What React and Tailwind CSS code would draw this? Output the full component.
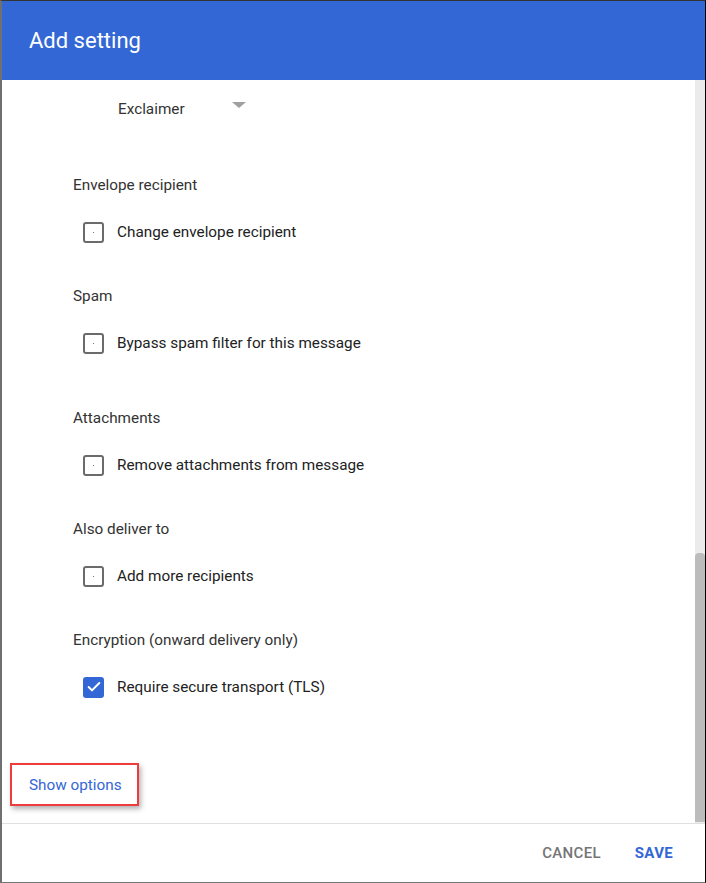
import { Check } from "lucide-react";

const sections = [
  { title: "Envelope recipient", label: "Change envelope recipient", gap: "mt-[56px]" },
  { title: "Spam", label: "Bypass spam filter for this message", gap: "mt-[44px]" },
  { title: "Attachments", label: "Remove attachments from message", gap: "mt-[55px]" },
  { title: "Also deliver to", label: "Add more recipients", gap: "mt-[44px]" },
  { title: "Encryption (onward delivery only)", label: "Require secure transport (TLS)", gap: "mt-[44px]", checked: true },
];

function Box({ checked }) {
  if (checked) {
    return (
      <span className="w-[21px] h-[21px] rounded-[3px] bg-[#3367d6] flex items-center justify-center">
        <Check className="w-[16px] h-[16px] text-white" strokeWidth={3} />
      </span>
    );
  }
  return (
    <span className="w-[21px] h-[21px] rounded-[3px] border-2 border-[#6b6b6b] flex items-center justify-center">
      <span className="w-px h-px bg-[#777]" />
    </span>
  );
}

export default function App() {
  return (
    <div
      className="w-[706px] h-[883px] bg-white border-t border-t-[#333] border-l-2 border-l-[#707070] border-r border-r-black border-b border-b-[#777] flex flex-col overflow-hidden"
      style={{ fontFamily: "Roboto, 'Liberation Sans', sans-serif" }}
    >
      <div className="h-[79px] shrink-0 bg-[#3367d6] flex items-center pl-[27px]">
        <h2 className="text-white text-[22px] leading-none">Add setting</h2>
      </div>

      <div className="flex h-[743px] shrink-0">
        <div className="flex-1 flex flex-col text-[15.3px] leading-[20px] text-[#333]">
          <div className="mt-[19px] pl-[116px] flex items-start">
            <span className="text-[#333]">Exclaimer</span>
            <span className="ml-[47px] mt-[3px] w-0 h-0 border-l-[7px] border-r-[7px] border-t-[6px] border-l-transparent border-r-transparent border-t-[#a0a0a0]" />
          </div>

          {sections.map((s) => (
            <div key={s.title} className={s.gap}>
              <div className="pl-[71px] text-[#333]">{s.title}</div>
              <div className="mt-[27px] pl-[81px] flex items-center h-[20px]">
                <Box checked={s.checked} />
                <span className="ml-[13px] text-[#222]">{s.label}</span>
              </div>
            </div>
          ))}

          <div className="mt-[66px] ml-[8px]">
            <div className="inline-flex w-[129px] h-[43px] items-center pl-[17px] border-2 border-[#ee3b3b] shadow-[2px_3px_5px_rgba(0,0,0,0.3)]">
              <span className="text-[#3367d6]">Show options</span>
            </div>
          </div>
        </div>

        <div className="w-[10px] bg-[#ebebeb] flex flex-col justify-end">
          <div className="h-[269px] bg-[#bcbcbc] rounded-t-[4px] mb-[1px]" />
        </div>
      </div>

      <div className="flex-1 border-t border-[#e0e0e0] flex items-center justify-end pr-[32px] gap-[34px] text-[15px] font-medium tracking-[0.3px]">
        <button className="text-[#757575]">CANCEL</button>
        <button className="text-[#3367d6] font-bold">SAVE</button>
      </div>
    </div>
  );
}
